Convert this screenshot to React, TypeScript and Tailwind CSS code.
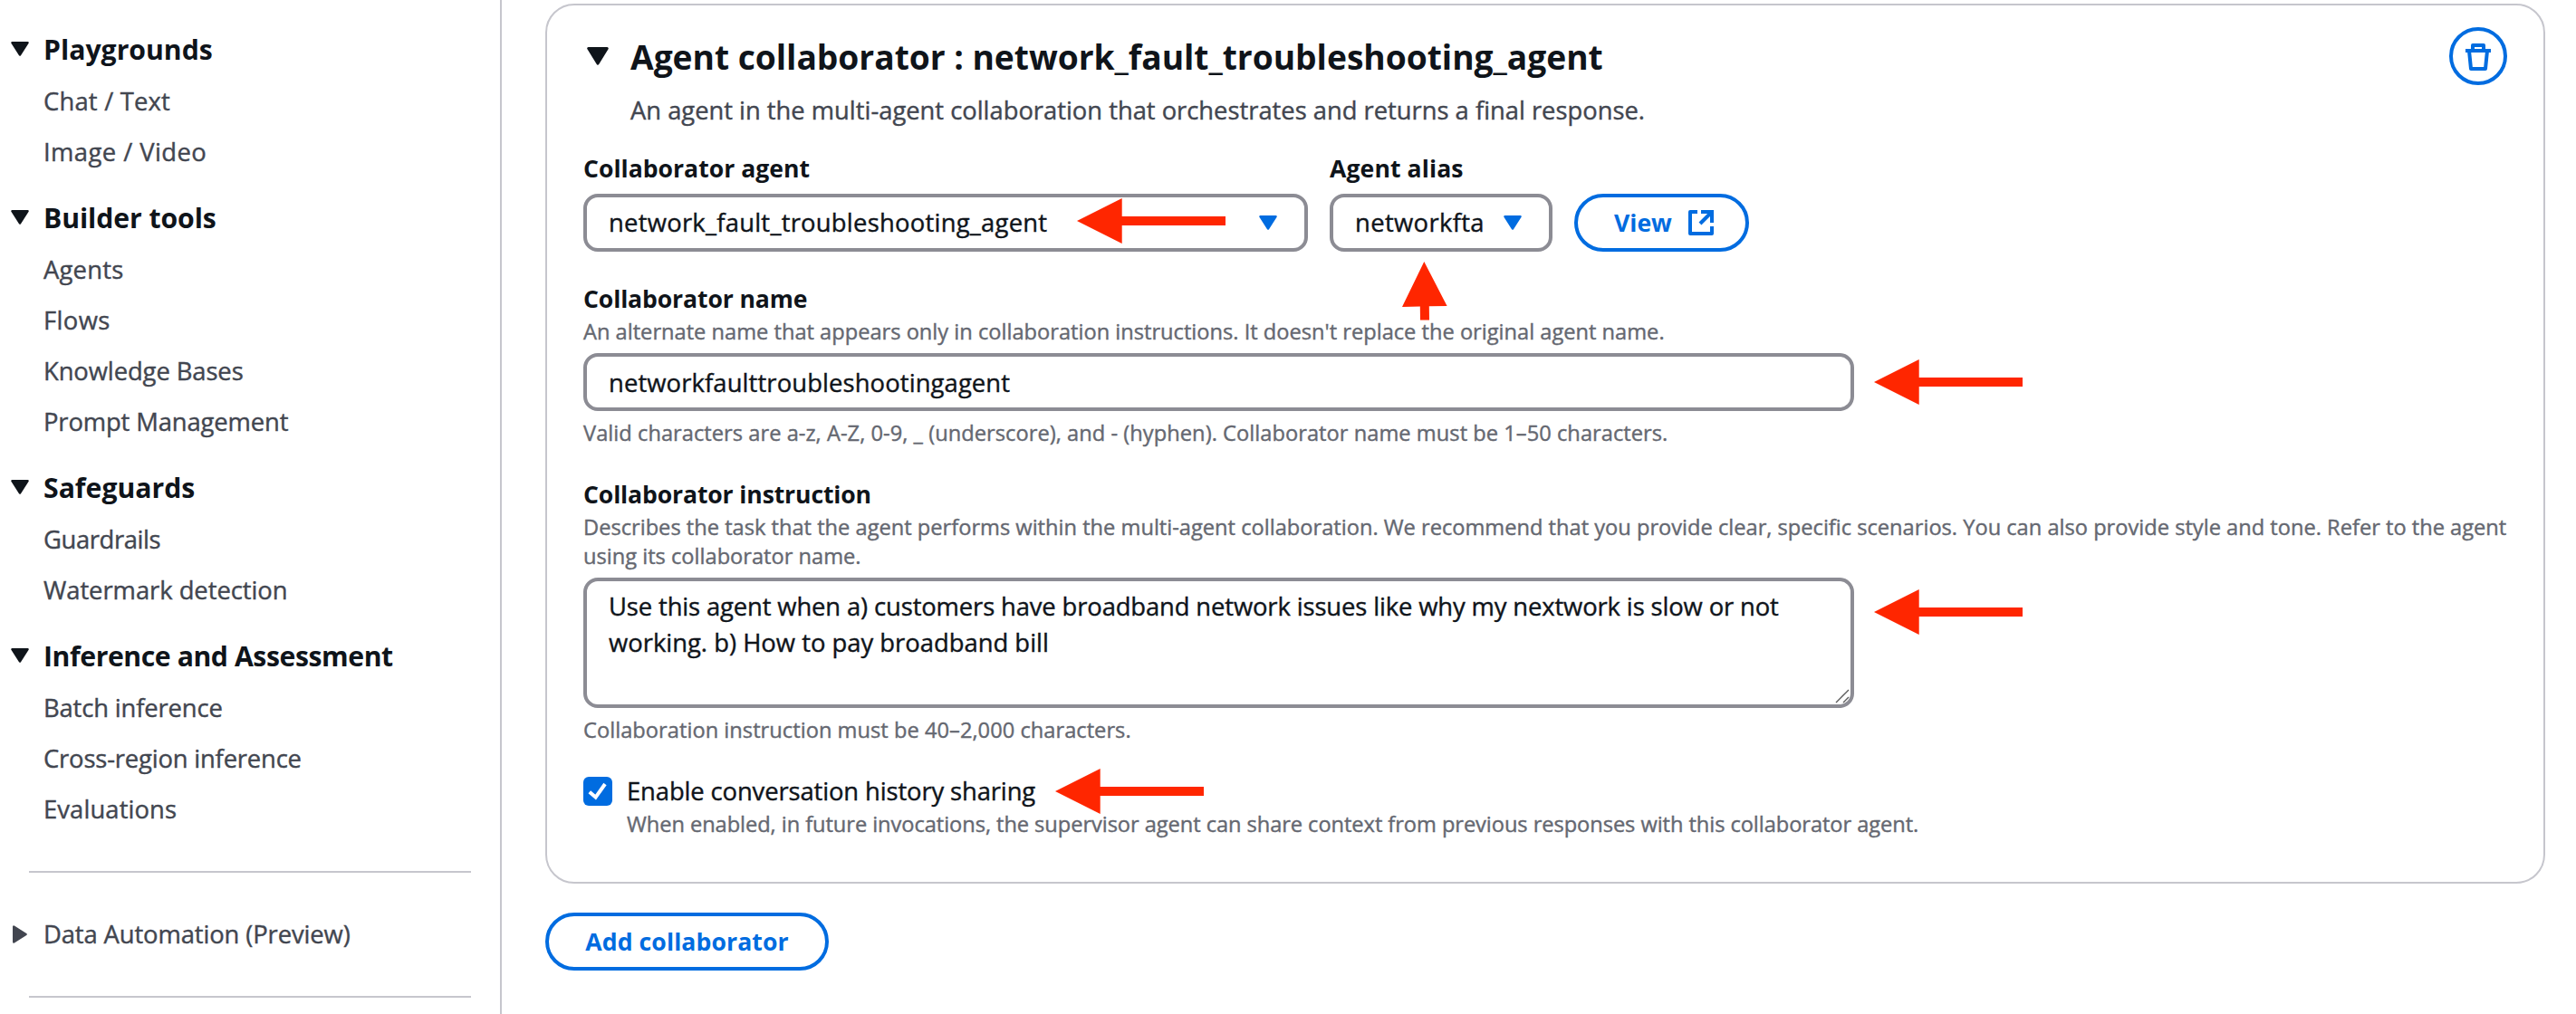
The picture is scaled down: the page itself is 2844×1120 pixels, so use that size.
import type { ReactNode } from "react";

type NavItem = { label: string; tracking: string };
type NavSection = { title: string; tracking: string; items: NavItem[] };

const sections: NavSection[] = [
  {
    title: "Playgrounds",
    tracking: "tracking-normal",
    items: [
      { label: "Chat / Text", tracking: "tracking-[0.2px]" },
      { label: "Image / Video", tracking: "tracking-[0.43px]" },
    ],
  },
  {
    title: "Builder tools",
    tracking: "tracking-[-0.08px]",
    items: [
      { label: "Agents", tracking: "tracking-[0.2px]" },
      { label: "Flows", tracking: "tracking-[0.4px]" },
      { label: "Knowledge Bases", tracking: "tracking-[-0.1px]" },
      { label: "Prompt Management", tracking: "tracking-[-0.13px]" },
    ],
  },
  {
    title: "Safeguards",
    tracking: "tracking-normal",
    items: [
      { label: "Guardrails", tracking: "tracking-[-0.4px]" },
      { label: "Watermark detection", tracking: "tracking-[-0.05px]" },
    ],
  },
  {
    title: "Inference and Assessment",
    tracking: "tracking-[-0.43px]",
    items: [
      { label: "Batch inference", tracking: "tracking-[-0.15px]" },
      { label: "Cross-region inference", tracking: "tracking-[-0.18px]" },
      { label: "Evaluations", tracking: "tracking-[0.1px]" },
    ],
  },
];

function CaretDown({ className }: { className: string }) {
  return (
    <svg viewBox="0 0 20 16" preserveAspectRatio="none" className={className} fill="currentColor" stroke="currentColor" strokeWidth="2.4" strokeLinejoin="round">
      <path d="M1.4 1.2H18.6L10 14.6Z" />
    </svg>
  );
}

function CaretRight() {
  return (
    <svg viewBox="0 0 16 20" className="ml-0.5 h-5 w-4 shrink-0" fill="currentColor" stroke="currentColor" strokeWidth="2.4" strokeLinejoin="round">
      <path d="M1.2 1.4V18.6L14.6 10Z" />
    </svg>
  );
}

function TrashIcon() {
  return (
    <svg viewBox="0 0 32 32" className="size-8" fill="none" stroke="currentColor" strokeWidth="4" strokeLinejoin="round">
      <path d="M2 10H30" />
      <path d="M10 10V4H22V10" />
      <path d="M6 10L8 30H24L26 10" />
    </svg>
  );
}

function ExternalIcon() {
  return (
    <svg viewBox="0 0 32 32" className="size-8" fill="none" stroke="currentColor" strokeWidth="4">
      <path d="M12 4H4V28H28V20" strokeLinejoin="round" />
      <path d="M16 4H28V16" />
      <path d="M28 4L15 17" />
    </svg>
  );
}

function ArrowLeft({ className }: { className: string }) {
  return (
    <svg viewBox="0 0 164 50" className={`absolute z-10 h-[50px] w-[164px] ${className}`} fill="#ff2600">
      <path d="M0 25L49.7 0V20H164V30H49.7V50Z" />
    </svg>
  );
}

function ArrowUp({ className }: { className: string }) {
  return (
    <svg viewBox="0 0 50 65" className={`absolute z-10 h-[65px] w-[50px] ${className}`} fill="#ff2600">
      <path d="M24.3 0L49.6 49L29.8 49.3L30 64.5H20L19.8 49.5L0 50Z" />
    </svg>
  );
}

function Label({ children, className }: { children: ReactNode; className: string }) {
  return (
    <div className={`h-10 text-[26.6px] leading-10 font-bold [-webkit-text-stroke:0px] ${className}`}>{children}</div>
  );
}

function Hint({ children, className }: { children: ReactNode; className: string }) {
  return <div className={`text-[23.65px] leading-8 whitespace-nowrap text-[#656871] ${className}`}>{children}</div>;
}

function Sidebar() {
  return (
    <nav className="h-full w-[554px] shrink-0 border-r-2 border-[#c6c6cd] pt-[9px]">
      {sections.map((section) => (
        <section key={section.title}>
          <h2 className={`flex h-[74px] items-center gap-4 pt-4 pl-3 text-[30.2px] leading-10 font-bold [-webkit-text-stroke:0px] ${section.tracking}`}>
            <CaretDown className="h-4 w-5 shrink-0" />
            <span className="pt-0.5">{section.title}</span>
          </h2>
          <ul className="text-[#424650]">
            {section.items.map((item) => (
              <li key={item.label} className={`flex h-14 items-center pt-0.5 pl-12 text-[27.4px] leading-10 ${item.tracking}`}>
                {item.label}
              </li>
            ))}
          </ul>
        </section>
      ))}
      <hr className="mt-[41px] ml-8 w-[488px] border-t-2 border-[#c6c6cd]" />
      <div className="flex h-[136px] items-center gap-[18px] pl-3 text-[27.4px] leading-10 tracking-[-0.12px] text-[#424650]">
        <CaretRight />
        Data Automation (Preview)
      </div>
      <hr className="ml-8 w-[488px] border-t-2 border-[#c6c6cd]" />
    </nav>
  );
}

function CollaboratorCard() {
  return (
    <section className="h-[972px] w-[2208px] rounded-[32px] border-2 border-[#c6c6cd] px-10 pt-6">
      <header className="flex h-16 items-center">
        <CaretDown className="ml-1 h-5 w-6 shrink-0" />
        <h1 className="ml-6 flex-1 pt-px text-[37.2px] leading-[48px] font-bold tracking-[-0.03px] [-webkit-text-stroke:0px]">
          Agent collaborator : network_fault_troubleshooting_agent
        </h1>
        <button className="flex size-16 items-center justify-center rounded-full border-4 border-[#006ce0] text-[#006ce0]" aria-label="Remove">
          <TrashIcon />
        </button>
      </header>
      <p className="mt-2 pl-[52px] text-[27.33px] leading-10 text-[#424650]">
        An agent in the multi-agent collaboration that orchestrates and returns a final response.
      </p>

      <div className="mt-6 flex items-end gap-6">
        <div>
          <Label className="tracking-normal">Collaborator agent</Label>
          <div className="relative mt-2 flex h-16 w-[800px] items-center justify-between rounded-2xl border-4 border-[#8c8c94] pr-[30px] pl-6">
            <span className="text-[27.4px] leading-10 tracking-[0.25px]">network_fault_troubleshooting_agent</span>
            <CaretDown className="h-4 w-5 text-[#006ce0]" />
            <ArrowLeft className="top-px left-[541px]" />
          </div>
        </div>
        <div>
          <Label className="tracking-[0.1px]">Agent alias</Label>
          <div className="relative mt-2 flex h-16 w-[246px] items-center justify-between rounded-2xl border-4 border-[#8c8c94] pr-[30px] pl-6">
            <span className="text-[27.4px] leading-10 tracking-[0.35px]">networkfta</span>
            <CaretDown className="h-4 w-5 text-[#006ce0]" />
            <ArrowUp className="top-[71px] left-[76px]" />
          </div>
        </div>
        <button className="flex h-16 w-[193px] items-center justify-between rounded-full border-4 border-[#006ce0] pr-[33px] pl-10 text-[26.6px] leading-10 font-bold text-[#006ce0] [-webkit-text-stroke:0px]">
          View
          <ExternalIcon />
        </button>
      </div>

      <div className="mt-8">
        <Label className="tracking-[-0.13px]">Collaborator name</Label>
        <Hint className="tracking-normal">
          An alternate name that appears only in collaboration instructions. It doesn't replace the original agent name.
        </Hint>
        <div className="relative mt-2 flex h-16 w-[1403px] items-center rounded-2xl border-4 border-[#8c8c94] pt-0.5 pl-6 text-[27.4px] leading-10 tracking-[0.11px]">
          networkfaulttroubleshootingagent
          <ArrowLeft className="top-[3px] left-[1421px]" />
        </div>
        <Hint className="mt-2 tracking-[0.04px]">
          Valid characters are a-z, A-Z, 0-9, _ (underscore), and - (hyphen). Collaborator name must be 1–50 characters.
        </Hint>
      </div>

      <div className="mt-8">
        <Label className="tracking-[-0.14px]">Collaborator instruction</Label>
        <Hint className="tracking-normal">
          Describes the task that the agent performs within the multi-agent collaboration. We recommend that you provide clear,
          specific scenarios. You can also provide style and tone. Refer to the agent
          <br />
          using its collaborator name.
        </Hint>
        <div className="relative mt-2 h-36 w-[1403px] rounded-2xl border-4 border-[#8c8c94] pt-2 pl-6 text-[27.4px] leading-10 whitespace-nowrap">
          <p className="tracking-[-0.13px]">
            Use this agent when a) customers have broadband network issues like why my nextwork is slow or not
          </p>
          <p>working. b) How to pay broadband bill</p>
          <svg viewBox="0 0 16 16" className="absolute right-px bottom-px size-4" fill="none" stroke="#5a5a5a" strokeWidth="1.4">
            <path d="M1 15L15 1M9 15L15 9" />
          </svg>
          <ArrowLeft className="top-[9px] left-[1421px]" />
        </div>
        <Hint className="mt-2 tracking-[0.03px]">Collaboration instruction must be 40–2,000 characters.</Hint>
      </div>

      <div className="relative mt-8 flex gap-4">
        <div className="mt-1 size-8 rounded-md bg-[#006ce0]">
          <svg viewBox="0 0 32 32" className="size-8" fill="none" stroke="#fff" strokeWidth="4">
            <path d="M6.8 16.8L13.6 22.6L24 8" />
          </svg>
        </div>
        <div>
          <div className="text-[27.4px] leading-10 tracking-[-0.12px]">Enable conversation history sharing</div>
          <Hint className="tracking-[-0.06px]">
            When enabled, in future invocations, the supervisor agent can share context from previous responses with this
            collaborator agent.
          </Hint>
        </div>
        <ArrowLeft className="top-[-5px] left-[521px]" />
      </div>
    </section>
  );
}

export default function App() {
  return (
    <div className="flex h-[1120px] w-[2844px] overflow-hidden bg-white font-['Open_Sans',sans-serif] text-[#0f141a] [-webkit-text-stroke:0.4px]">
      <Sidebar />
      <main className="pt-1 pl-12">
        <CollaboratorCard />
        <button className="mt-8 flex h-16 w-[313px] items-center justify-center rounded-full border-4 border-[#006ce0] text-[26.6px] leading-10 font-bold tracking-[0.1px] text-[#006ce0] [-webkit-text-stroke:0px]">
          Add collaborator
        </button>
      </main>
    </div>
  );
}
